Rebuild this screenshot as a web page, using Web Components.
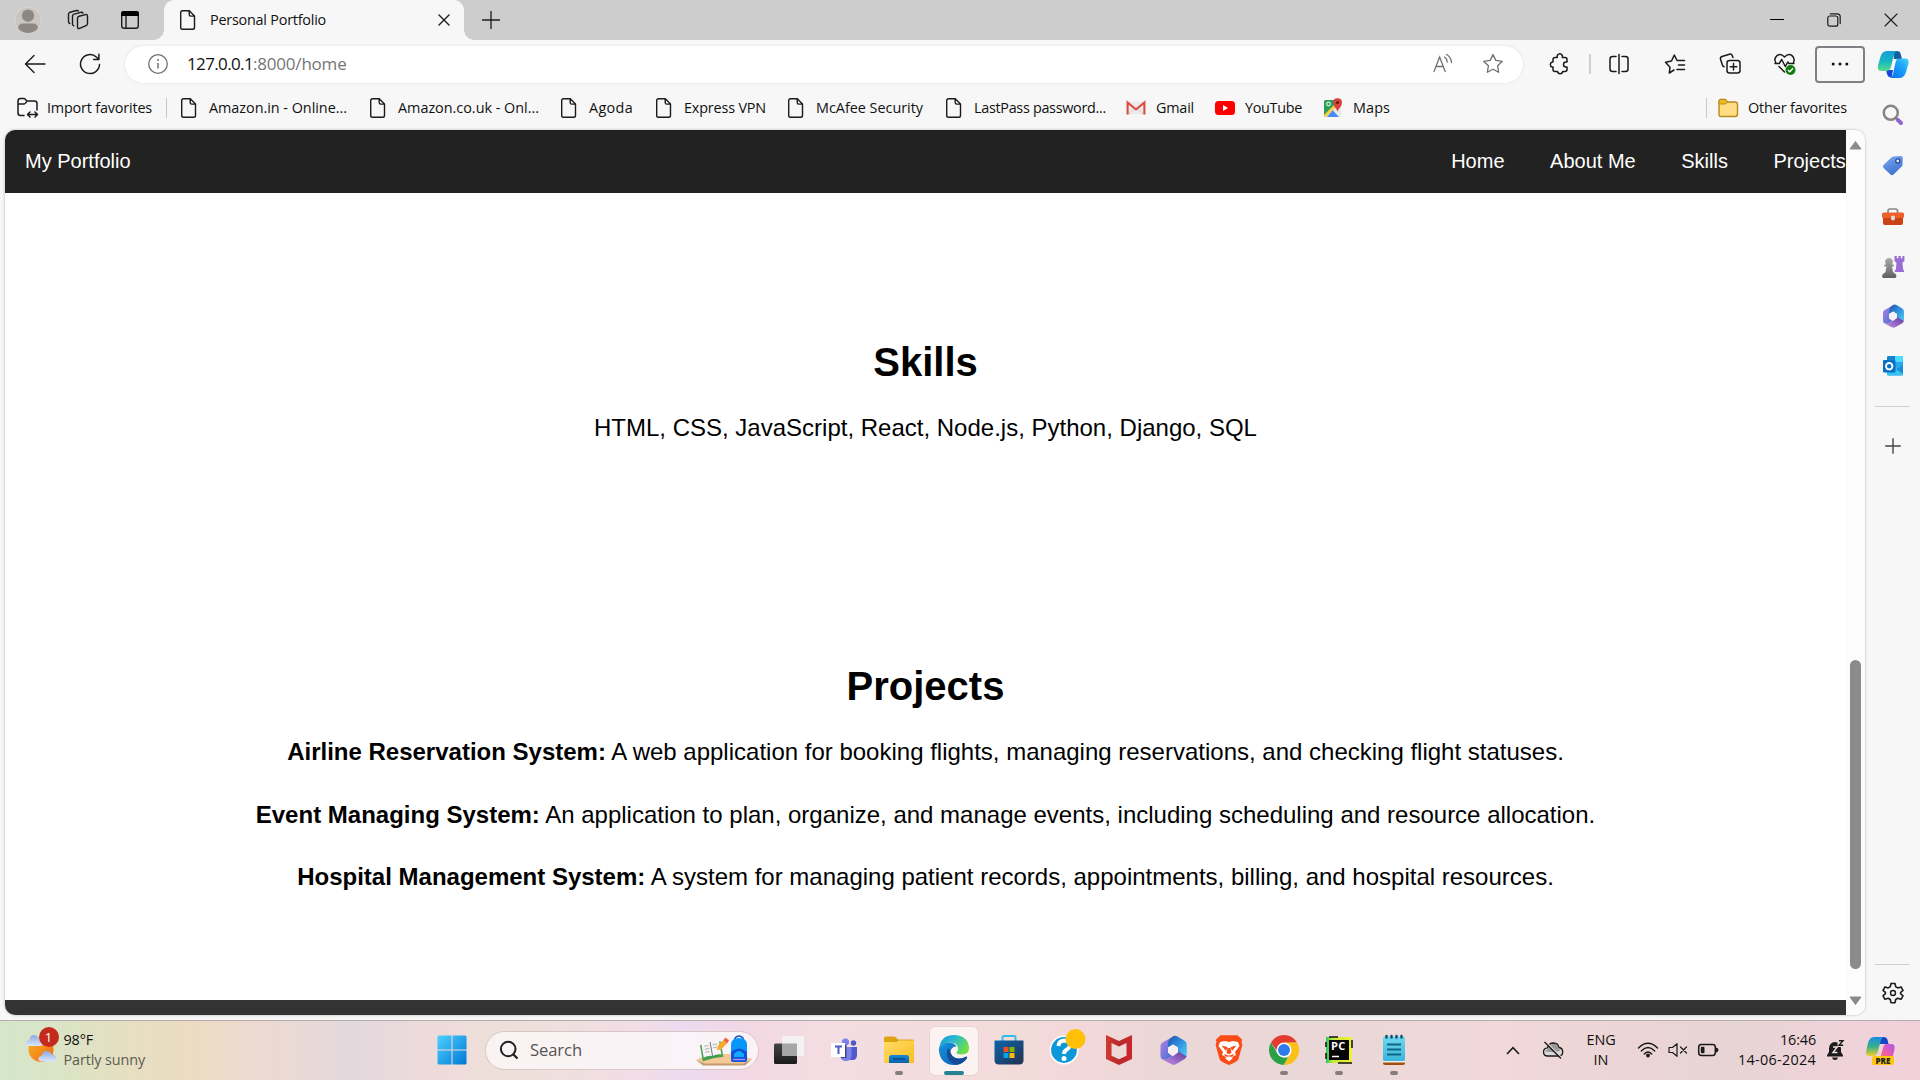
<!DOCTYPE html>
<html lang="en">
<head>
<meta charset="utf-8">
<title>Personal Portfolio</title>
<style>
html,body{margin:0;padding:0;width:1920px;height:1080px;overflow:hidden;background:#f7f7f7}
body{font-family:"Open Sans","Noto Sans",sans-serif;color:#111}
</style>
</head>
<body>
<desk-top></desk-top>
<script>
const define=(name,html,setup)=>customElements.define(name,class extends HTMLElement{
  connectedCallback(){
    if(this.shadowRoot)return;
    const t=document.createElement('template');t.innerHTML=html;
    this.attachShadow({mode:'open'}).appendChild(t.content.cloneNode(true));
    if(setup)setup(this,this.shadowRoot);
  }
});

/* ---------- icons: [width, height, markup] ---------- */
const S='fill="none" stroke="#1b1b1b" stroke-width="1.4" stroke-linecap="round" stroke-linejoin="round"';
const m365=(id)=>`<defs><linearGradient id="a${id}" x1="0" y1="0" x2="1" y2="1"><stop offset="0" stop-color="#b783e4"/><stop offset=".5" stop-color="#7a78dc"/><stop offset="1" stop-color="#3a6ad6"/></linearGradient><linearGradient id="b${id}" x1="0" y1="0" x2="1" y2="1"><stop offset="0" stop-color="#234fa8"/><stop offset=".45" stop-color="#2f8bdc"/><stop offset="1" stop-color="#4fcdf5"/></linearGradient><linearGradient id="c${id}" x1="0" y1="1" x2="1" y2="0"><stop offset="0" stop-color="#c690e8"/><stop offset="1" stop-color="#5f3a9c"/></linearGradient></defs>
<path fill="url(#a${id})" d="M13 .8 3.200 6.200Q2 7 2 8.500V17q0 1.500 1.300 2.300 2.500 1.200 5-.6L11.500 17 8 14.200V9.800L12 7.500z"/>
<path fill="url(#b${id})" d="M9.500 3 12.500.8q1.500-.6 3 .3l5.500 3.200q2 1.200 2 3.300V17.500L16 13.800V10L12 7.600 8 10Q7.500 5.500 9.500 3z"/>
<path fill="url(#c${id})" d="M3.500 19.500Q7 20 10 18l6-4.200V13L22.800 17q-.3 1.500-1.800 2.400l-6.800 3.900q-1.700.9-3.400 0z"/><path d="M12 7.600 16 10v4l-4 2.700L8 14v-4z" fill="#f6f0f4"/>`;
const chromeArcs=`<path fill="#e33b2e" d="M2 7.500A15 15 0 0 1 28 7.500L15 8 8 16z"/><path fill="#fbc116" d="M28 7.500A15 15 0 0 1 14.500 30L21.500 18.500 15 7.500z"/><path fill="#2aa147" d="M2 7.500 8.600 18.700 15 22.500h4L14.500 30A15 15 0 0 1 2 7.500z"/><circle cx="15" cy="15" r="7.500" fill="#fff"/><circle cx="15" cy="15" r="6" fill="#2f7bea"/>`;
const ICONS={
avatar:[28,28,`<clipPath id="c"><circle cx="14" cy="14" r="13"/></clipPath><circle cx="14" cy="14" r="13.2" fill="#c9c6c2" stroke="#dcd9d5"/><g clip-path="url(#c)" fill="#8c8782"><circle cx="14" cy="9.700" r="6.2"/><path d="M4 28V23q0-5.500 5-5.500h10q5 0 5 5.500V28z"/></g>`],
stacks:[22,22,`<g ${S}><path d="M10.500 9.300q0-1.600 1.500-2l6.500-1.700q2-.4 2 1.500v7.500q0 1.600-1.500 2.100l-6.300 2.600q-2.200.8-2.200-1.500z"/><path d="M6.800 16.800Q5.500 16.400 5.500 14.800V7.300q0-1.600 1.600-2.100L14 3.300q1.500-.3 2 .8"/><path d="M2.800 14.500Q1.500 14.100 1.500 12.500V5.300q0-1.600 1.600-2.100L9.500 1.500q1.400-.3 2 .6"/></g>`],
tabact:[20,20,`<rect x="1.700" y="1.700" width="16.600" height="16.600" rx="2.600" ${S}/><path d="M1 6V3.500Q1 1 3.500 1h13Q19 1 19 3.500V6z" fill="#000"/><path d="M6 6v12" stroke="#1b1b1b" stroke-width="1.400"/>`],
file:[20,22,`<path ${S} d="M4.500 1.700h6.800l5.200 5.200v11.600q0 1.800-1.800 1.800H4.500q-1.800 0-1.800-1.800V3.500q0-1.800 1.800-1.800zM11.200 2v3.500q0 1.600 1.600 1.600h3.400"/>`],
close:[12,12,`<path d="M1 1 11 11M11 1 1 11" ${S}/>`],
plus:[18,18,`<path d="M9 .5v17M.5 9h17" ${S} style="stroke-width:1.300"/>`],
min:[14,14,`<path d="M.5 6.500h13" ${S} style="stroke-width:1.100;stroke:#000"/>`],
max:[14,14,`<g ${S} style="stroke-width:1.200"><rect x=".8" y="3" width="10" height="10.200" rx="2"/><path d="M3.400.8h6.800q3 0 3 3v6.800"/></g>`],
wclose:[14,14,`<path d="M1 1 13 13M13 1 1 13" ${S} style="stroke-width:1.100"/>`],
back:[22,20,`<path d="M21 10H1.500M10 1.500 1.500 10l8.500 8.500" ${S}/>`],
reload:[22,22,`<path d="M20.500 11.500A9.500 9.500 0 1 1 17.600 4.200L19.800 6.200M19.900 1.200V6.500H14.700" ${S} style="stroke-width:1.500"/>`],
info:[22,22,`<circle cx="11" cy="11" r="9.300" fill="none" stroke="#707070" stroke-width="1.300"/><path d="M11 10v5.500" stroke="#707070" stroke-width="1.500"/><circle cx="11" cy="7" r="1" fill="#707070"/>`],
read:[22,22,`<g fill="none" stroke="#707070" stroke-width="1.300" stroke-linecap="round"><path d="M2 18.500 7.600 4 13.200 18.500M4 13.500h7.200M12.500 4q2.400 1.500 2.700 5M14.500 1.500q4.500 2.500 5 8"/></g>`],
star:[22,22,`<path fill="none" stroke="#707070" stroke-width="1.300" stroke-linejoin="round" d="M11 1.500 13.800 7.400 20.300 8.300 15.600 12.800 16.700 19.300 11 16.200 5.300 19.300 6.400 12.800 1.700 8.300 8.200 7.400z"/>`],
puzzle:[22,22,`<path ${S} style="stroke-width:1.500" d="M5 6.500q0-2 2-2h2.300a2.700 2.700 0 1 1 5 0H17q2 0 2 2V9h-1a2.500 2.500 0 0 0 0 5h1v2.500q0 2-2 2h-2.200a2.700 2.700 0 0 1-5.300 0H7q-2 0-2-2V14H4.200a2.600 2.600 0 0 1 0-5H5z"/>`],
split:[22,22,`<g ${S} style="stroke-width:1.500"><path d="M8 3.500H4.500q-2.500 0-2.500 2.500v10q0 2.500 2.500 2.500H8M14 3.500h3.500Q20 3.500 20 6v10q0 2.500-2.500 2.500H14M11 1.500v19"/></g>`],
favs:[22,22,`<g ${S} style="stroke-width:1.500"><path d="M10 17 5.300 20 6 14.200 1.500 9.200 7.500 8 10.300 2 13 7.500h7.500M14.500 12h6M13 16.500h7.500"/></g>`],
coll:[22,22,`<g ${S} style="stroke-width:1.500"><rect x="8" y="7.500" width="13" height="12.500" rx="2.500"/><path d="M14.500 10.500v6.500M11.200 13.700h6.600M5 13.800Q3.800 13.500 3.400 12L1.500 6.300Q1 4.200 3 3.500L10.500 1.200q2-.5 2.700 1.300l.8 2"/></g>`],
health:[24,24,`<g ${S} style="stroke-width:1.500"><path d="M2.700 10.500Q.6 6.500 4 3.600q3.800-2.600 7.500 1.400Q15.500 1 19 3.600q3.300 2.900 1.500 6.900M2 11.500h4.200l2.500-4 3.600 7 2.500-4.500 1.200 1.500h5M6 14.500 11.500 20"/></g><circle cx="17.500" cy="18" r="5" fill="#107c10"/><path d="M15 18l1.800 1.800 3.200-3.600" stroke="#fff" stroke-width="1.300" fill="none"/>`],
dots:[18,6,`<g fill="#111"><circle cx="2.200" cy="3" r="1.500"/><circle cx="9" cy="3" r="1.500"/><circle cx="15.800" cy="3" r="1.500"/></g>`],
copilot:[32,28,`<defs><linearGradient id="g1" x1="0" y1="0" x2="0" y2="1"><stop offset="0" stop-color="#139fd8"/><stop offset=".5" stop-color="#16b5c4"/><stop offset="1" stop-color="#57dc8c"/></linearGradient><linearGradient id="g2" x1="0" y1="1" x2="1" y2="0"><stop offset="0" stop-color="#0a6ef0"/><stop offset=".6" stop-color="#1ba4fb"/><stop offset="1" stop-color="#4fd2f2"/></linearGradient></defs><path fill="#12609e" d="M16 1h4q3 0 3.700 3l1.300 5h-8z"/><path fill="#1546d8" d="M9 20h7l-1.500 7.500Q11 27.500 10 24z"/><path fill="url(#g1)" d="M10 1h10q-2.500 1-3.200 4L14 17q-1 4-5 4H4.500Q0 21 1 15.500L3.400 7Q5 1 10 1z"/><path fill="url(#g2)" d="M22 8.500h6q4.500 0 3.500 5L29 22q-1.700 6-7 6h-9q2.300-1 3-4l2.500-11.500q.8-4 3.500-4z"/>`],
importf:[22,22,`<g ${S} style="stroke-width:1.500"><path d="M8 18.500H4.500Q2 18.500 2 16V4q0-2.500 2.500-2.500h3q1.300 0 2 .9L11 4h7.500Q21 4 21 6.500V13M2.500 7h5q1.300 0 2-.9L11 4M12 17.500h9M14 15l-2.500 2.500L14 20M19 15l2.500 2.500L19 20"/></g>`],
gmail:[20,16,`<rect x="1" y="1.500" width="18" height="13" rx="1" fill="#ececec"/><path d="M3 14 8 8.500M17 14l-5-5.500" stroke="#ccc"/><path d="M1.600 14.500V2.500L10 9.500l8.400-7v12" fill="none" stroke="#db4a3f" stroke-width="2.100"/>`],
yt:[20,14,`<rect width="20" height="14" rx="3.500" fill="#fe0000"/><path d="M8 4v6l5-3z" fill="#fff"/>`],
maps:[20,20,`<rect x="1" y="2" width="17" height="17" rx="1.500" fill="#e9e9ea"/><path d="M2.500 2H13v6L1 18V3.500Q1 2 2.500 2z" fill="#2a9d57"/><path d="M4 19 9.500 12 16 19z" fill="#4a8bf4"/><path d="M1 17 11.500 6.500 13.500 8.500 3 19H1z" fill="#fbd046"/><circle cx="5.500" cy="6" r="1.800" fill="none" stroke="#d8efe0" stroke-width="1.200"/><path d="M14.500.3q4.500 0 4.500 4.400 0 2.600-3 6-1 1.500-1.500 3-.4-1.500-1.400-3-3-3.400-3-6Q10.100.3 14.500.3z" fill="#d9433a"/><circle cx="14.500" cy="4.600" r="1.700" fill="#6c1f1a"/>`],
folderY:[22,20,`<path d="M2 16.500V3.500q0-2 2-2h4.500L10.500 4H18q2.500 0 2.500 2.500v9.500q0 2.500-2.500 2.500H4q-2 0-2-2z" fill="#fedd84" stroke="#b88a1a" stroke-width="1.400"/><path d="M2 6V3.500q0-2 2-2h4.500l2 2.200L8.600 6z" fill="#eebb26" stroke="#b88a1a"/>`],
ssearch:[22,22,`<circle cx="8.800" cy="8.800" r="7" fill="none" stroke="#868583" stroke-width="2.500"/><path d="m13.300 13.300 1.700 1.700" stroke="#868583" stroke-width="2"/><path d="m15.800 15.800 3.200 3.200" stroke="#9164cc" stroke-width="4" stroke-linecap="round"/>`],
tag:[22,22,`<defs><linearGradient id="g" x1="0" y1="0" x2=".4" y2="1"><stop offset="0" stop-color="#79aaf2"/><stop offset="1" stop-color="#4274d0"/></linearGradient></defs><path fill="url(#g)" d="M11.500 1.500 18.500 1q2.300 0 2.300 2.300l-.3 6.500q0 1-.8 1.800l-8.200 8q-1.500 1.400-3 0L1.600 13q-1.500-1.500 0-3L9.700 2.300q.8-.8 1.800-.8z"/><circle cx="15.800" cy="6" r="2.100" fill="#dce9fb" stroke="#264b98" stroke-width="1.300"/>`],
tool:[24,20,`<path d="M7 6V4q0-2 2-2h5.500q2 0 2 2v2" fill="none" stroke="#858585" stroke-width="1.700"/><rect x="2" y="9" width="20" height="9" rx="2" fill="#ca4216"/><rect x="1" y="5.500" width="22" height="5.500" rx="1.500" fill="#ed6029"/><rect x="10" y="8.500" width="4" height="5" rx="2" fill="#ddd"/>`],
chess:[24,24,`<defs><linearGradient id="g" x1="0" y1="0" x2="0" y2="1"><stop offset="0" stop-color="#aaa"/><stop offset="1" stop-color="#606060"/></linearGradient></defs><path fill="#9a6cd6" d="M13.500 1h2.300v2.200h1.600V1h2.400v2.200h1.600V1h2v5l-2 1.800.6 5.700 1.300 3.500H13.500l1.500-3.500.5-5.700-2-1.800z"/><path fill="url(#g)" d="M8 3a4 4 0 0 1 3 6.600h1.500q1 .9 0 2H11l1 5.500 3 2.500q1 3.400-1 3.400H2.500q-2 0-1-3.400l3-2.500 1-5.500H3.600q-1-1 0-2H5A4 4 0 0 1 8 3z"/>`],
m365s:[24,24,m365(1)],
outlook:[22,22,`<rect x="5" y="1" width="16" height="19.500" rx="1.500" fill="#29a7e9"/><path d="M5 2.500Q5 1 6.500 1H13v6H5z" fill="#1584cf"/><path d="M13 1h6.500Q21 1 21 2.500V7h-8z" fill="#4bdcff"/><path d="m5 18 16-8v9q0 1.500-1.500 1.500h-13Q5 20.500 5 19z" fill="#37c3f3"/><path d="m14 14 7 5v-9z" fill="#168fd8"/><rect x="1" y="5" width="12.500" height="12.500" rx="1" fill="#0870c5"/><circle cx="7.200" cy="11.200" r="3.200" fill="none" stroke="#fff" stroke-width="1.900"/>`],
splus:[16,16,`<path d="M8 .7v14.600M.7 8h14.600" ${S} style="stroke:#444"/>`],
gear:[22,22,`<path ${S} style="stroke-width:1.600" d="M9 1.500h4l.7 3.200 2.100 1.200 3.200-1 2 3.400-2.400 2.200v1.200l2.400 2.100-2 3.500-3.200-1-2.100 1.200-.7 3.200H9l-.7-3.200-2.100-1.200-3.200 1-2-3.500 2.400-2.200v-1.200L1 8.300l2-3.400 3.200 1 2.100-1.200z"/><circle cx="11" cy="11" r="2.500" ${S}/>`],
weather:[32,32,`<defs><linearGradient id="s" x1="0" y1="0" x2="1" y2="1"><stop offset="0" stop-color="#f9b820"/><stop offset="1" stop-color="#f0651a"/></linearGradient><linearGradient id="k" x1="0" y1="0" x2="0" y2="1"><stop offset="0" stop-color="#8ca8e4"/><stop offset="1" stop-color="#dbe7fa"/></linearGradient></defs><circle cx="16" cy="17.500" r="12.500" fill="url(#s)"/><path fill="url(#k)" d="M4 14q-3 0-3-2.800 0-3 3.300-3Q5 3 9 3q3.500 0 4.500 3.500Q18 7 18 11q0 3-3 3z"/><path fill="url(#k)" d="M16.500 29.500q-3 0-3-2.700 0-2.600 3-3Q17.500 19 22 19q3.500 0 4.400 3.500 4.600.2 4.600 3.700t-3.500 3.300z"/>`],
win:[30,30,`<defs><linearGradient id="w" x1="0" y1="0" x2="1" y2="1"><stop offset="0" stop-color="#4fd0ff"/><stop offset="1" stop-color="#0078d4"/></linearGradient></defs><path fill="url(#w)" d="M2 .5h12.500v14H.5V2Q.5.500 2 .5zM15.500.5H28q1.500 0 1.500 1.500v12.500h-14zM.5 15.500h14v14H2q-1.500 0-1.500-1.500zM15.500 15.500h14V28q0 1.500-1.500 1.500H15.500z"/>`],
tsearch:[20,20,`<circle cx="9.200" cy="9" r="7.300" fill="none" stroke="#1f1f1f" stroke-width="2"/><path d="m14.200 14.200 4.300 4.300" stroke="#1f1f1f" stroke-width="2.200"/>`],
school:[58,34,`<path d="M1 27 13 21h30l14 5-9 5H10z" fill="#f3c998"/><path d="m1 27 9 3.500h38l9-4.500-7 6.500H8z" fill="#c49a6c"/><g transform="rotate(-10 17 17)"><path d="M6 10h21v15.500q-10-1-21 1z" fill="#43a04a"/><path d="M7.500 8.500q5-1.500 9 .5v14q-4-1.500-9 0zM16.500 9q4-2 9-.5V23q-5-1.500-9 0z" fill="#f6f4f7"/><path d="M10 12h4.500M10 15h4.500M10 18h4.500M18.500 12h4.500M18.500 15h4" stroke="#b5b0b8"/><path d="M16.500 9v14.500" stroke="#777"/></g><path d="m22 17.500 1-5 5.500-5.500 3.500 3.500-5.500 5.500z" fill="#f9a928"/><path d="m28.500 7 2-2.500 3.500 3-2 3z" fill="#f35b45"/><path d="M40 7.500V5q4-4 8 0v2.500" fill="none" stroke="#1458c8" stroke-width="1.600"/><path d="M36 27V12q0-7 8-7t8 7v15z" fill="#0797fb"/><path d="M36 19q8-7 16 0v8q0 2-2 2H38q-2 0-2-2z" fill="#0b53db"/><path d="M39 21q5-6 10 0v3H39z" fill="#19a9fb"/><path d="M38 26.500h12" stroke="#a98bf5" stroke-width="1.500"/>`],
taskview:[32,30,`<defs><linearGradient id="t" x1="0" y1="0" x2="0" y2="1"><stop offset="0" stop-color="#454545"/><stop offset="1" stop-color="#1b1b1b"/></linearGradient></defs><rect x="1" y="8.500" width="23" height="20.500" rx="1.500" fill="url(#t)"/><rect x="9" y="1" width="22" height="20" rx="1.500" fill="#f3f3f3" fill-opacity=".92"/><path d="M9 8.500h15V21H9z" fill="#9b9b9b" fill-opacity=".85"/>`],
teams:[28,26,`<circle cx="15.500" cy="5" r="3.600" fill="#7b83eb"/><circle cx="23.500" cy="6" r="2.700" fill="#5059c9"/><path d="M18 10h9v8q0 5-4.500 5H18z" fill="#5059c9"/><path d="M10 10h11.500v8q0 6-5.500 6t-6-6z" fill="#7b83eb"/><path d="M14 8h2.500v13H11v-1h3z" fill="#3f4688"/><rect x="1" y="6" width="14" height="14" fill="#fff"/><path d="M5 9.500h7M8.500 9.500V17" stroke="#5059c9" stroke-width="2"/>`],
explorer:[32,30,`<defs><linearGradient id="e" x1="0" y1="0" x2="1" y2="1"><stop offset="0" stop-color="#ffdc6a"/><stop offset="1" stop-color="#fbbd1c"/></linearGradient><linearGradient id="f" x1="0" y1="0" x2="0" y2="1"><stop offset="0" stop-color="#1487d9"/><stop offset="1" stop-color="#0b62ac"/></linearGradient></defs><path d="M1 3q0-1.500 1.500-1.500H11q1 0 1.800.8L15 4.500h15q1 0 1 1.500v4H1z" fill="#dda311"/><path d="M1 7h13l1.500-1.500H31V27q0 1-1 1H2q-1 0-1-1z" fill="url(#e)"/><path d="M6 28v-5.500Q6 20 8.500 20h15q2.500 0 2.500 2.500V28z" fill="url(#f)"/><path d="M10.500 24h11" stroke="#064a86" stroke-width="1.500" stroke-linecap="round"/>`],
edge:[32,32,`<defs><linearGradient id="a" x1="0" y1="0" x2="1" y2=".5"><stop offset="0" stop-color="#1b93d6"/><stop offset=".5" stop-color="#2bbbd0"/><stop offset="1" stop-color="#6be048"/></linearGradient><linearGradient id="b" x1="0" y1="0" x2="1" y2="1"><stop offset="0" stop-color="#1795e0"/><stop offset="1" stop-color="#0a56aa"/></linearGradient></defs><path fill="url(#b)" d="M1 17Q0 12 6 9.500q9-3 12.500 3-5.500 0-6 5.500.3 6.500 7.500 6.800 5 .2 7.500-2 2-.8 1.500 1.500Q24.500 31 16 31 2.500 30.500 1 17z"/><path fill="#114c95" d="M11 14q1.500 10 10 10.500 4 0 6.500-1.500 2-1 1.500 1Q25 30 18 31 8 27 9 17q.5-2 2-3z"/><path fill="url(#a)" d="M1 16Q2 1 16 1q14 .5 15 12.500.3 7-7.500 7-5 0-5.200-2.200 2-1.300 1.700-4Q19.500 9 13 8.500 4.500 8.500 1 16z"/>`],
store:[30,32,`<defs><linearGradient id="s" x1="0" y1="0" x2="1" y2="1"><stop offset="0" stop-color="#0c63ab"/><stop offset="1" stop-color="#233250"/></linearGradient></defs><path d="M8.500 7V3.500Q8.500 2 10 2h10q1.500 0 1.500 1.500V7" fill="none" stroke="#2cbfeb" stroke-width="2"/><path d="M.5 6.500h29v19.500q0 4.500-4.500 4.500H5Q.5 30.500.5 26z" fill="url(#s)"/><path d="M9.500 13h5v5h-5z" fill="#f25022"/><path d="M15.500 13h5v5h-5z" fill="#7fba00"/><path d="M9.500 19h5v5h-5z" fill="#00a4ef"/><path d="M15.500 19h5v5h-5z" fill="#ffb900"/>`],
help:[38,38,`<circle cx="15" cy="22" r="13.700" fill="#0d98da" stroke="#fff" stroke-width="1.600"/><path d="M9.500 18q.5-5.500 6-5.500 5.500.3 5.500 4.500 0 2.500-3.200 4.500Q15 23 15 26" fill="none" stroke="#fff" stroke-width="3.800"/><circle cx="15" cy="30.500" r="2.500" fill="#fff"/><circle cx="26.500" cy="11" r="10" fill="#ffc107"/>`],
mcafee:[28,32,`<defs><linearGradient id="m"><stop offset="0" stop-color="#d1392f"/><stop offset=".5" stop-color="#b82a2c"/><stop offset="1" stop-color="#ca292d"/></linearGradient></defs><path fill="url(#m)" fill-rule="evenodd" d="M1 1l13 6 13-6v24l-13 6-13-6zM6.500 9v12.700l7.500 3.500 7.500-3.500V9L14 12.500z"/>`],
m365t:[24,24,m365(2),30,30],
brave:[28,32,`<path fill="#fa4b18" d="M5.500 1.200h17l3.200 3 1.500 1.500-.7 2 .9 3-4 14.500Q22 28 14 31 6 28 4.600 25.200L.6 10.700l.9-3-.7-2L2.300 4.200z"/><path fill="#fff" d="M5 8 10 7l4 1 4-1 5 1 1.500 4-4.500 6 1 3-5 2.500h-4L7 21l1-3-4.500-6z"/><path fill="#fa4b18" d="m6.500 11.500 6 1.500-1.500 4zM21.500 11.500l-6 1.500 1.500 4zM12.500 14h3l1 5-2.500 1.200-2.500-1.200zM9 20l4.500 1.500h1L19 20l-1 2-4 1.500L10 22z"/><path fill="#fff" d="m10 24 4-1.800 4 1.800-4 3.500z"/>`],
chrome:[30,30,chromeArcs],
pycharm:[26,28,`<defs><linearGradient id="p"><stop offset="0" stop-color="#22c46b"/><stop offset=".25" stop-color="#c2e936"/><stop offset="1" stop-color="#f2ee3a"/></linearGradient></defs><path d="M0 1h26v26H0z" fill="url(#p)"/><path d="M0 6v5M0 17v6M3 1h9M26 4v8M12 27h14" stroke="#111" stroke-width="1.500"/><path d="M3 4h20v20H3z" fill="#050505"/><path d="M6 20.500h7" stroke="#fff" stroke-width="1.500"/>`],
notepad:[24,32,`<defs><linearGradient id="n" x1="0" y1="0" x2="0" y2="1"><stop offset="0" stop-color="#6fd8ee"/><stop offset="1" stop-color="#3bb4dc"/></linearGradient></defs><path d="M1 27h22v2q0 2-2 2H3q-2 0-2-2z" fill="#a44c0e"/><path d="M1 26h22v2.500H1z" fill="#eee"/><rect x="1" y="2.500" width="22" height="24.500" rx="1.500" fill="url(#n)"/><path d="M5 10.500h14M5 15.500h14M5 20.500h14" stroke="#0d6686" stroke-width="1.800"/><g stroke="#12506c" stroke-width="2.500" stroke-linecap="round"><path d="M4.500 2v1.500M9.500 2v1.500M14.500 2v1.500M19.500 2v1.500"/></g>`],
chev:[14,10,`<path d="m1 8 6-6.300L13 8" fill="none" stroke="#1b1b1b" stroke-width="1.600"/>`],
cloud:[22,20,`<path d="M5.500 16Q1.500 16 1.500 11.800 1.600 8 5.500 7.800 7 3 11.500 3q4.500.2 5.500 4.500 3.700.6 3.700 4.300 0 4.200-4 4.200z" fill="#d9d9d9" stroke="#1b1b1b" stroke-width="1.300"/><path d="M3 11.500 7 7.800q2-4 5-4 3.700.2 4.500 4.500l2 2.500-6 1.500z" fill="#999"/><path d="m3.500 1.500 16 16" stroke="#f0dada" stroke-width="1.500"/><path d="m2.500 2 16.500 16.500" stroke="#1b1b1b" stroke-width="1.400"/>`],
wifi:[22,18,`<g fill="none" stroke="#1b1b1b" stroke-width="1.500" stroke-linecap="round"><path d="M1.500 7Q11-2.500 20.500 7M4.300 10Q11 3.200 17.700 10M7.300 13Q11 9 14.700 13"/></g><circle cx="11" cy="14.500" r="1.900" fill="#1b1b1b"/>`],
mute:[20,16,`<path d="M1 5.500h3.500L9 1.700v12.600L4.500 10.500H1zM12.500 5l6 6M18.500 5l-6 6" ${S} style="stroke-width:1.200"/>`],
batt:[22,16,`<rect x="1.700" y="2.500" width="16.600" height="11" rx="2.700" ${S} style="stroke-width:1.500"/><rect x="3.800" y="4.700" width="3.700" height="6.600" rx="1" fill="#1b1b1b"/><path d="M19 6q2 0 2 2t-2 2z" fill="#1b1b1b" stroke="#1b1b1b"/>`],
bell:[18,22,`<path d="M1 17.500v-1.300L3 13V9.500Q3.300 3.500 9 3q5.500.5 6 6.500V13l2 3.200v1.300zM6 18.500h6q-.6 2.500-3 2.500t-3-2.500z" fill="#1b1b1b"/><path d="M11.500 0H19v8h-7.500z" fill="#ecd6d8"/><path d="M13 1.700h4l-4 4.600h4.200" fill="none" stroke="#1b1b1b" stroke-width="1.400"/><path d="M7 8h4.200L7 13.500h4.400" fill="none" stroke="#f4dfe0" stroke-width="1.400"/>`],
cpre:[30,28,`<defs><linearGradient id="x" x1="0" y1="0" x2="0" y2="1"><stop offset="0" stop-color="#1b8be6"/><stop offset=".5" stop-color="#35b08a"/><stop offset="1" stop-color="#f3cf2a"/></linearGradient><linearGradient id="y" x1="0" y1="1" x2="1" y2="0"><stop offset="0" stop-color="#ff7d5e"/><stop offset=".5" stop-color="#ee5da4"/><stop offset="1" stop-color="#a957f0"/></linearGradient></defs><path d="M15 1h4q2.700 0 3.500 2.700L23.500 8H14z" fill="#1743c4"/><path fill="url(#x)" d="M9 1h10q-2.500.7-3.300 4L13 15q-1.200 5-5 5H4.500Q0 20 1.200 15L3 7q1.500-6 6-6z"/><path fill="url(#y)" d="M21 8h5q4.500 0 3.500 5L28 20q-1.500 6-6 6H12q2.600-1 3.300-4L18 12q1-4 3-4z"/>`]
};

define('ui-icon',`<style>:host{display:inline-flex;flex:none}svg{display:block;overflow:visible}</style>`,(el,r)=>{
  const [w,h,m,dw,dh]=ICONS[el.getAttribute('name')];
  r.innerHTML+=`<svg width="${dw||w}" height="${dh||h}" viewBox="0 0 ${w} ${h}">${m}</svg>`;
});
/* A centred cell that holds one icon: w = cell width, ml = space before it */
define('ui-cell',`<style>:host{display:flex;flex:none;align-items:center;justify-content:center}</style><slot></slot>`,(el)=>{
  el.style.width=el.getAttribute('w')+'px';
  if(el.hasAttribute('h'))el.style.height=el.getAttribute('h')+'px';
  if(el.hasAttribute('ml'))el.style.marginLeft=el.getAttribute('ml')+'px';
});
/* One line of text tracked to a given width */
define('ui-text',`<style>:host{display:inline-block;white-space:pre;flex:none;font-size:14.4px;line-height:20px}span{display:inline-block}</style><span><slot></slot></span>`,(el,r)=>{
  if(el.hasAttribute('size'))el.style.fontSize=el.getAttribute('size')+'px';
  const w=+el.getAttribute('w'),s=r.querySelector('span');
  if(w)s.style.letterSpacing=((w-s.getBoundingClientRect().width)/el.textContent.length)+'px';
});

define('title-bar',`<style>
:host{display:flex;height:40px;background:#cdcdcd;align-items:center;flex:none}
.tab{display:flex;align-items:center;width:300px;height:40px;background:#f7f7f7;border-radius:10px 10px 0 0;position:relative}
.tab::before,.tab::after{content:"";position:absolute;bottom:0;width:10px;height:10px}
.tab::before{left:-10px;background:radial-gradient(circle at 0 0,transparent 9.500px,#f7f7f7 10px)}
.tab::after{right:-10px;background:radial-gradient(circle at 100% 0,transparent 9.500px,#f7f7f7 10px)}
.sp{flex:1}
</style>
<ui-cell w="56"><ui-icon name="avatar"></ui-icon></ui-cell>
<ui-cell w="44"><ui-icon name="stacks"></ui-icon></ui-cell>
<ui-cell w="60"><ui-icon name="tabact"></ui-icon></ui-cell>
<div class="tab" style="margin-left:4px"><ui-cell w="20" ml="14"><ui-icon name="file"></ui-icon></ui-cell><ui-text w="116" style="margin-left:12px">Personal Portfolio</ui-text><span class="sp"></span><ui-cell w="40"><ui-icon name="close"></ui-icon></ui-cell></div>
<ui-cell w="52" ml="1"><ui-icon name="plus"></ui-icon></ui-cell>
<span class="sp"></span>
<ui-cell w="57"><ui-icon name="min"></ui-icon></ui-cell><ui-cell w="57"><ui-icon name="max"></ui-icon></ui-cell><ui-cell w="58"><ui-icon name="wclose"></ui-icon></ui-cell>`);

define('tool-bar',`<style>
:host{display:flex;height:48px;align-items:center;flex:none}
.url{display:flex;align-items:center;width:1398px;height:37px;margin-left:14px;background:#fff;border-radius:19px;box-shadow:0 0 3px #0000001c}
.g{color:#767676}.sp{flex:1}.sep{width:2px;height:20px;background:#cfcfcf;margin-left:10px}
.more{box-sizing:border-box;width:50px;height:37px;margin-left:10px;border:2px solid #7d8084;border-radius:4px;display:flex;align-items:center;justify-content:center}
</style>
<ui-cell w="69"><ui-icon name="back"></ui-icon></ui-cell><ui-cell w="42"><ui-icon name="reload"></ui-icon></ui-cell>
<div class="url"><ui-cell w="26" ml="19.500"><ui-icon name="info"></ui-icon></ui-cell><ui-text size="17" w="66" style="margin-left:16.500px">127.0.0.1</ui-text><ui-text size="17" w="93.500" class="g">:8000/home</ui-text><span class="sp"></span><ui-cell w="32"><ui-icon name="read"></ui-icon></ui-cell><ui-cell w="34" ml="16.500"><ui-icon name="star"></ui-icon></ui-cell><span style="width:13.500px"></span></div>
<ui-cell w="40" ml="16"><ui-icon name="puzzle"></ui-icon></ui-cell><span class="sep"></span>
<ui-cell w="40" ml="8"><ui-icon name="split"></ui-icon></ui-cell><ui-cell w="40" ml="16"><ui-icon name="favs"></ui-icon></ui-cell><ui-cell w="40" ml="15"><ui-icon name="coll"></ui-icon></ui-cell><ui-cell w="40" ml="15"><ui-icon name="health"></ui-icon></ui-cell>
<div class="more"><ui-icon name="dots"></ui-icon></div><ui-cell w="32" ml="12"><ui-icon name="copilot"></ui-icon></ui-cell>`);

/* bookmark: icon + label in a fixed pitch */
define('book-mark',`<style>:host{display:flex;flex:none;align-items:center}ui-text{margin-left:10px}</style>`,(el,r)=>{
  el.style.width=el.getAttribute('pitch')+'px';
  r.innerHTML+=`<ui-cell w="20"><ui-icon name="${el.getAttribute('icon')}"></ui-icon></ui-cell><ui-text w="${el.getAttribute('w')}">${el.getAttribute('label')}</ui-text>`;
});
define('favorites-bar',`<style>:host{display:flex;height:40px;align-items:center;flex:none}.sp{flex:1}.sep{width:1px;height:20px;background:#c8c8c8}</style>
<book-mark style="margin-left:17px" pitch="149" icon="importf" w="105" label="Import favorites"></book-mark><span class="sep"></span><span style="width:12px"></span>
<book-mark pitch="189" icon="file" w="138" label="Amazon.in - Online..."></book-mark>
<book-mark pitch="191" icon="file" w="141" label="Amazon.co.uk - Onl..."></book-mark>
<book-mark pitch="95" icon="file" w="44" label="Agoda"></book-mark>
<book-mark pitch="132" icon="file" w="82" label="Express VPN"></book-mark>
<book-mark pitch="158" icon="file" w="107" label="McAfee Security"></book-mark>
<book-mark pitch="182" icon="file" w="132" label="LastPass password..."></book-mark>
<book-mark pitch="89" icon="gmail" w="38" label="Gmail"></book-mark>
<book-mark pitch="108" icon="yt" w="57" label="YouTube"></book-mark>
<book-mark pitch="80" icon="maps" w="37" label="Maps"></book-mark>
<span class="sp"></span><span class="sep"></span><book-mark style="margin-left:11px" pitch="148" icon="folderY" w="99" label="Other favorites"></book-mark>`);

define('nav-bar',`<style>
:host{display:flex;align-items:center;height:63px;box-sizing:border-box;padding:0 .3px 2px 20px;background:#222;color:#fff;font:20px/24px "Liberation Sans",Arial,sans-serif;flex:none}
b{font-weight:400;flex:1}nav{display:flex;gap:45.560px}
</style><b>My Portfolio</b><nav><slot></slot></nav>`);
define('page-section',`<style>
:host{display:block;text-align:center;font:24px/38px "Liberation Sans",Arial,sans-serif;color:#000}
h2{margin:0 0 24px;font-size:40px;line-height:46px}
.list{display:flex;flex-direction:column;gap:24.600px}
</style><h2></h2><div class="list"><slot></slot></div>`,(el,r)=>{r.querySelector('h2').textContent=el.getAttribute('heading');});
define('scroll-bar',`<style>
:host{display:flex;flex-direction:column;align-items:center;width:19px;background:#fcfcfc;box-sizing:border-box;padding:10px 0 9px;flex:none}
svg{display:block}i{display:block;width:11px;height:309px;border-radius:6px;background:#8b8b8b;margin:510px 0 27px}
</style><svg width="13" height="10"><path d="M6.500 1.500 12 9H1z" fill="#8b8b8b" stroke="#8b8b8b" stroke-linejoin="round"/></svg><i></i><svg width="13" height="10"><path d="M6.500 8.500 12 1H1z" fill="#8b8b8b" stroke="#8b8b8b" stroke-linejoin="round"/></svg>`);
define('web-page',`<style>
:host{display:flex;width:1860px;height:885px;margin:2px 0 0 5px;background:#fff;border-radius:10px;overflow:hidden;box-shadow:0 0 3px #0004;flex:none}
.v{display:flex;flex-direction:column;width:1841px}
.foot{height:15px;background:#333;margin-top:auto}p{margin:0;white-space:nowrap}
</style><div class="v"><nav-bar><span>Home</span><span>About Me</span><span>Skills</span><span>Projects</span></nav-bar>
<page-section heading="Skills" style="margin-top:146px"><p>HTML, CSS, JavaScript, React, Node.js, Python, Django, SQL</p></page-section>
<page-section heading="Projects" style="margin-top:216px"><p><strong>Airline Reservation System:</strong> A web application for booking flights, managing reservations, and checking flight statuses.</p><p><strong>Event Managing System:</strong> An application to plan, organize, and manage events, including scheduling and resource allocation.</p><p><strong>Hospital Management System:</strong> A system for managing patient records, appointments, billing, and hospital resources.</p></page-section>
<div class="foot"></div></div><scroll-bar></scroll-bar>`);

define('side-bar',`<style>:host{display:flex;flex-direction:column;align-items:center;width:53px;box-sizing:border-box;padding-top:2px;flex:none}hr{width:35px;height:1px;border:0;background:#cfcfcf;margin:0;flex:none}.sp{flex:1}</style>
<ui-cell w="53" h="50"><ui-icon name="ssearch"></ui-icon></ui-cell><ui-cell w="53" h="52"><ui-icon name="tag"></ui-icon></ui-cell><ui-cell w="53" h="50"><ui-icon name="tool"></ui-icon></ui-cell><ui-cell w="53" h="49"><ui-icon name="chess"></ui-icon></ui-cell><ui-cell w="53" h="50"><ui-icon name="m365s"></ui-icon></ui-cell><ui-cell w="53" h="50"><ui-icon name="outlook"></ui-icon></ui-cell>
<hr style="margin-top:15px"><ui-cell w="53" h="78"><ui-icon name="splus"></ui-icon></ui-cell><span class="sp"></span><hr><ui-cell w="53" h="55"><ui-icon name="gear"></ui-icon></ui-cell>`);

define('task-bar',`<style>
:host{display:flex;height:60px;box-sizing:border-box;border-top:1px solid #b5adab;align-items:center;flex:none;
background:linear-gradient(90deg,#d5e6cb 0,#dbe4c6 60px,#e6dfc1 130px,#ecdcc1 185px,#ecdad0 250px,#e9d9d7 310px,#e1d9de 350px,#eddadc 420px,#efdfd9 490px,#f0dfdd 560px,#f1dde8 650px,#eddaf0 685px,#f3d8e3 750px,#f4dde2 830px,#f3dcda 1000px,#f3d8da 1070px,#ead7d6 1180px,#ead7d7 1340px,#efd8d8 1420px,#f2d8d8 1500px,#ecd5d7 1620px,#e7d4d5 1740px,#efd3da 1830px,#f2d0da 1920px)}
.w{position:relative;display:flex}.bd{position:absolute;left:14px;top:-5px;width:20px;height:20px;border-radius:50%;background:#c42b1c;color:#fff;font-size:13px;line-height:20px;text-align:center}
.two{display:flex;flex-direction:column;height:40px;flex:none}
.pill{display:flex;align-items:center;box-sizing:border-box;width:274px;height:39px;border-radius:20px;background:#fcf7f8d9;border:1px solid #d9c6c8;margin:-1px 3px 0 5px;color:#555}
.c{width:55px;height:58px;display:flex;align-items:center;justify-content:center;flex:none;position:relative}
.c>ui-icon{margin-top:-1px}
.c.on ui-icon{z-index:1}.on::before{content:"";position:absolute;inset:5px 3.500px;border-radius:5px;background:#fbf2f1;box-shadow:0 0 0 .5px #dccbcb}
.d::after{content:"";position:absolute;bottom:5px;width:8px;height:4px;border-radius:2px;background:#877d7d}
.on::after{content:"";position:absolute;bottom:5px;width:20px;height:4px;border-radius:2px;background:#278392}
.pc{position:absolute;left:19.500px;top:16px;color:#fff;font:700 11px/16px "Open Sans",sans-serif;letter-spacing:.3px}
.pre{position:absolute;left:7px;top:20px;width:22px;height:9px;border-radius:2px;background:#fdc70d;color:#222;font:800 8px/9px "Open Sans",sans-serif;text-align:center}
.two.r{align-items:flex-end}.two.m{align-items:center}.sp{flex:1}
</style>
<span class="w" style="margin:-6px 7px 0 24.500px"><ui-icon name="weather"></ui-icon><span class="bd">1</span></span>
<div class="two" style="width:361px;margin-top:-1px"><ui-text w="29.500">98°F</ui-text><ui-text w="81.500" style="color:#5e5a52">Partly sunny</ui-text></div>
<span class="c"><ui-icon name="win"></ui-icon></span>
<div class="pill"><ui-icon name="tsearch" style="margin-left:13px"></ui-icon><ui-text size="16.600" w="52" style="margin-left:11.500px">Search</ui-text><span class="sp"></span><ui-icon name="school" style="margin-right:5px"></ui-icon></div>
<span class="c"><ui-icon name="taskview"></ui-icon></span><span class="c"><ui-icon name="teams"></ui-icon></span><span class="c d"><ui-icon name="explorer"></ui-icon></span><span class="c on"><ui-icon name="edge"></ui-icon></span><span class="c"><ui-icon name="store"></ui-icon></span><span class="c"><ui-icon name="help" style="margin:-8px 0 0 8px"></ui-icon></span><span class="c"><ui-icon name="mcafee"></ui-icon></span><span class="c"><ui-icon name="m365t" style="margin-left:-2px"></ui-icon></span><span class="c"><ui-icon name="brave"></ui-icon></span><span class="c d"><ui-icon name="chrome"></ui-icon></span><span class="c d"><ui-icon name="pycharm"></ui-icon><span class="pc">PC</span></span><span class="c d"><ui-icon name="notepad"></ui-icon></span>
<span class="sp"></span>
<ui-cell w="40"><ui-icon name="chev"></ui-icon></ui-cell><ui-cell w="40"><ui-icon name="cloud" style="margin-top:-1px"></ui-icon></ui-cell>
<div class="two m" style="width:56px;margin-top:-1px"><ui-text w="29">ENG</ui-text><ui-text w="15">IN</ui-text></div>
<ui-cell w="30" ml="4"><ui-icon name="wifi" style="margin-top:-1px"></ui-icon></ui-cell><ui-cell w="30"><ui-icon name="mute" style="margin-top:-1px"></ui-icon></ui-cell><ui-cell w="30"><ui-icon name="batt" style="margin-top:-1px"></ui-icon></ui-cell>
<div class="two r" style="width:93px;margin-top:-2px"><ui-text w="36">16:46</ui-text><ui-text w="78">14-06-2024</ui-text></div>
<ui-cell w="38"><ui-icon name="bell" style="margin-top:-2px"></ui-icon></ui-cell>
<span class="w" style="margin:-2px 25px 0 11px"><ui-icon name="cpre"></ui-icon><span class="pre">PRE</span></span>`);

define('desk-top',`<style>
:host{display:flex;flex-direction:column;width:1920px;height:1080px;background:#f7f7f7}
.main{display:flex;flex:1;min-height:0}.left{width:1866px;display:flex;flex-direction:column;flex:none}
</style><title-bar></title-bar><tool-bar></tool-bar><div class="main"><div class="left"><favorites-bar></favorites-bar><web-page></web-page></div><side-bar></side-bar></div><task-bar></task-bar>`);
</script>
</body>
</html>
